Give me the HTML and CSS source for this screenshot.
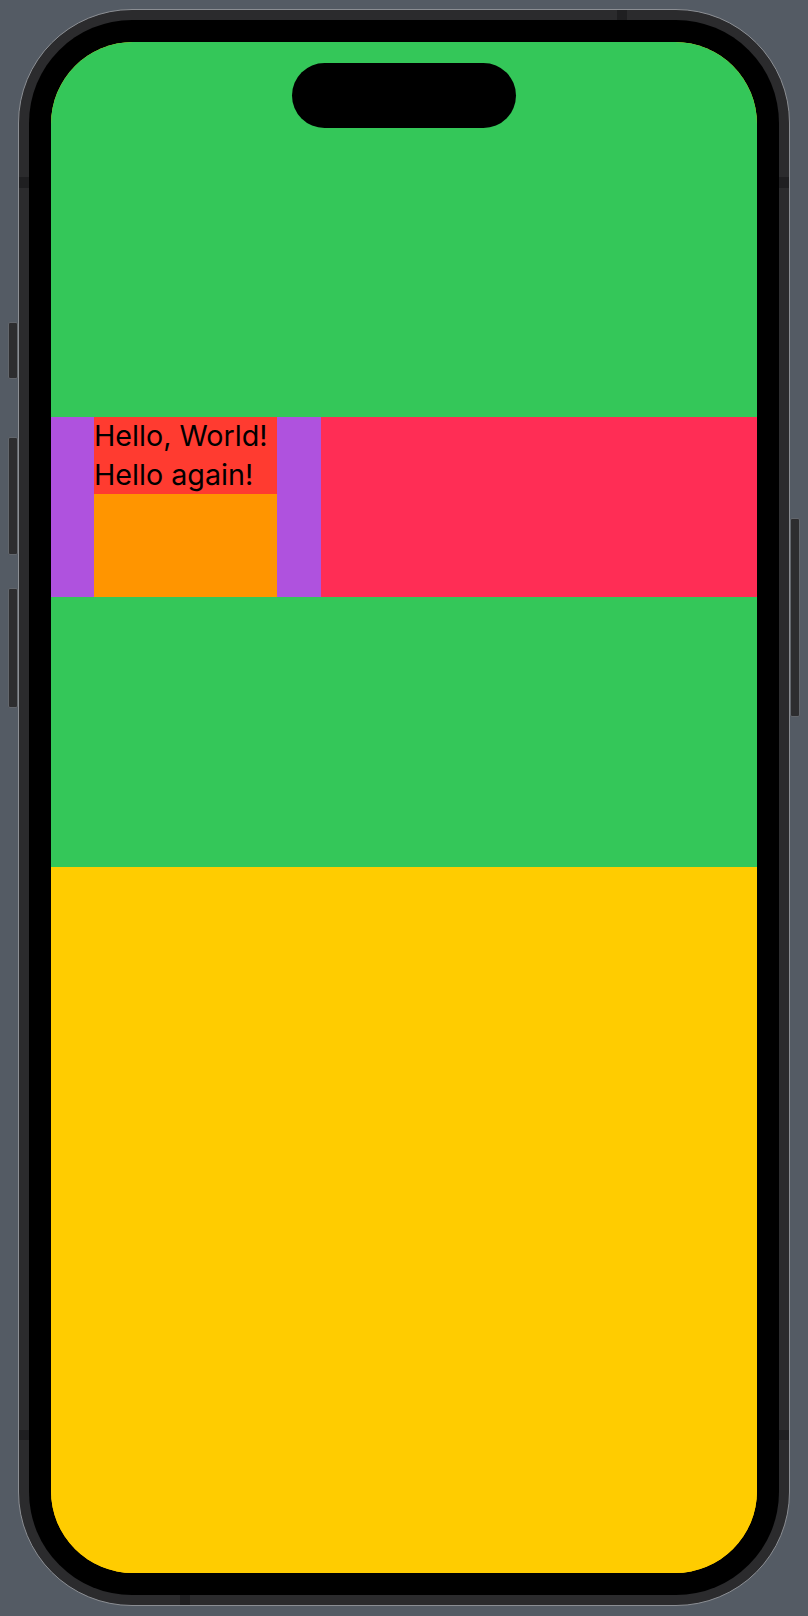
FILE: index.html
```html
<!DOCTYPE html>
<html lang="en">
<head>
<meta charset="utf-8">
<title>Preview</title>
<link rel="stylesheet" href="styles.css">
</head>
<body>
<div class="device">
  <div class="btn btn-action"></div>
  <div class="btn btn-vol-up"></div>
  <div class="btn btn-vol-down"></div>
  <div class="btn btn-power"></div>
  <div class="frame">
    <span class="ant ant-lt"></span>
    <span class="ant ant-lb"></span>
    <span class="ant ant-rt"></span>
    <span class="ant ant-rb"></span>
    <span class="ant ant-top"></span>
    <span class="ant ant-bottom"></span>
    <div class="bezel">
      <div class="screen">
        <div class="island"></div>
        <div class="band-top"></div>
        <div class="row">
          <div class="side side-left"></div>
          <div class="stack">
            <div class="texts">
              <div class="line">Hello, World!</div>
              <div class="line">Hello again!</div>
            </div>
            <div class="fill-orange"></div>
          </div>
          <div class="side side-right"></div>
          <div class="fill-pink"></div>
        </div>
        <div class="band-mid"></div>
        <div class="band-bottom"></div>
      </div>
    </div>
  </div>
</div>
</body>
</html>
```

FILE: styles.css
```css
* { box-sizing: border-box; }

html, body {
  margin: 0;
  padding: 0;
  background: #545b64;
}

body {
  width: 808px;
  height: 1616px;
  padding: 9px 18px 10px 18px;
  font-family: Inter, "Noto Sans", sans-serif;
}

.device {
  position: relative;
  width: 772px;
  height: 1597px;
}

.frame {
  position: relative;
  width: 100%;
  height: 100%;
  border: 1px solid #8b8e93;
  background: #2b2b2d;
  border-radius: 114px;
  padding: 10px;
}

.bezel {
  width: 100%;
  height: 100%;
  background: #000;
  border-radius: 103px;
  padding: 22px;
}

.screen {
  position: relative;
  width: 100%;
  height: 100%;
  border-radius: 82px;
  overflow: hidden;
  display: flex;
  flex-direction: column;
  background: #ffcc00;
}

.island {
  position: absolute;
  top: 21px;
  left: 241px;
  width: 224px;
  height: 65px;
  border-radius: 33px;
  background: #000;
}

.band-top {
  height: 375px;
  background: #34c759;
  flex: none;
}

.row {
  height: 180px;
  display: flex;
  flex: none;
}

.side {
  background: #af52de;
  flex: none;
}
.side-left { width: 43px; }
.side-right { width: 44px; }

.stack {
  width: 183px;
  display: flex;
  flex-direction: column;
  flex: none;
}

.texts {
  background: #ff3b30;
  height: 77px;
  color: #000;
  font-size: 28.7px;
  line-height: 38.5px;
  white-space: nowrap;
}

.fill-orange {
  flex: 1;
  background: #ff9500;
}

.fill-pink {
  flex: 1;
  background: #ff2d55;
}

.band-mid {
  height: 270px;
  background: #34c759;
  flex: none;
}

.band-bottom {
  flex: 1;
  background: #ffcc00;
}

/* side hardware buttons (sit outside the frame edge) */
.btn {
  position: absolute;
  width: 10px;
  background: #2d2d2f;
  border: 1px solid #62666c;
  border-radius: 2px;
}
.btn-action   { left: -10px; top: 313px; height: 57px; }
.btn-vol-up   { left: -10px; top: 428px; height: 118px; }
.btn-vol-down { left: -10px; top: 579px; height: 120px; }
.btn-power    { right: -10px; top: 509px; height: 199px; }

/* antenna bands on the metal rim */
.ant {
  position: absolute;
  background: #1f1f21;
}
.ant-lt { left: 0; top: 167px; width: 10px; height: 11px; }
.ant-lb { left: 0; top: 1420px; width: 10px; height: 10px; }
.ant-rt { right: 0; top: 167px; width: 10px; height: 11px; }
.ant-rb { right: 0; top: 1420px; width: 10px; height: 10px; }
.ant-top { left: 598px; top: 0; width: 10px; height: 10px; }
.ant-bottom { left: 161px; bottom: 0; width: 10px; height: 10px; }
```
